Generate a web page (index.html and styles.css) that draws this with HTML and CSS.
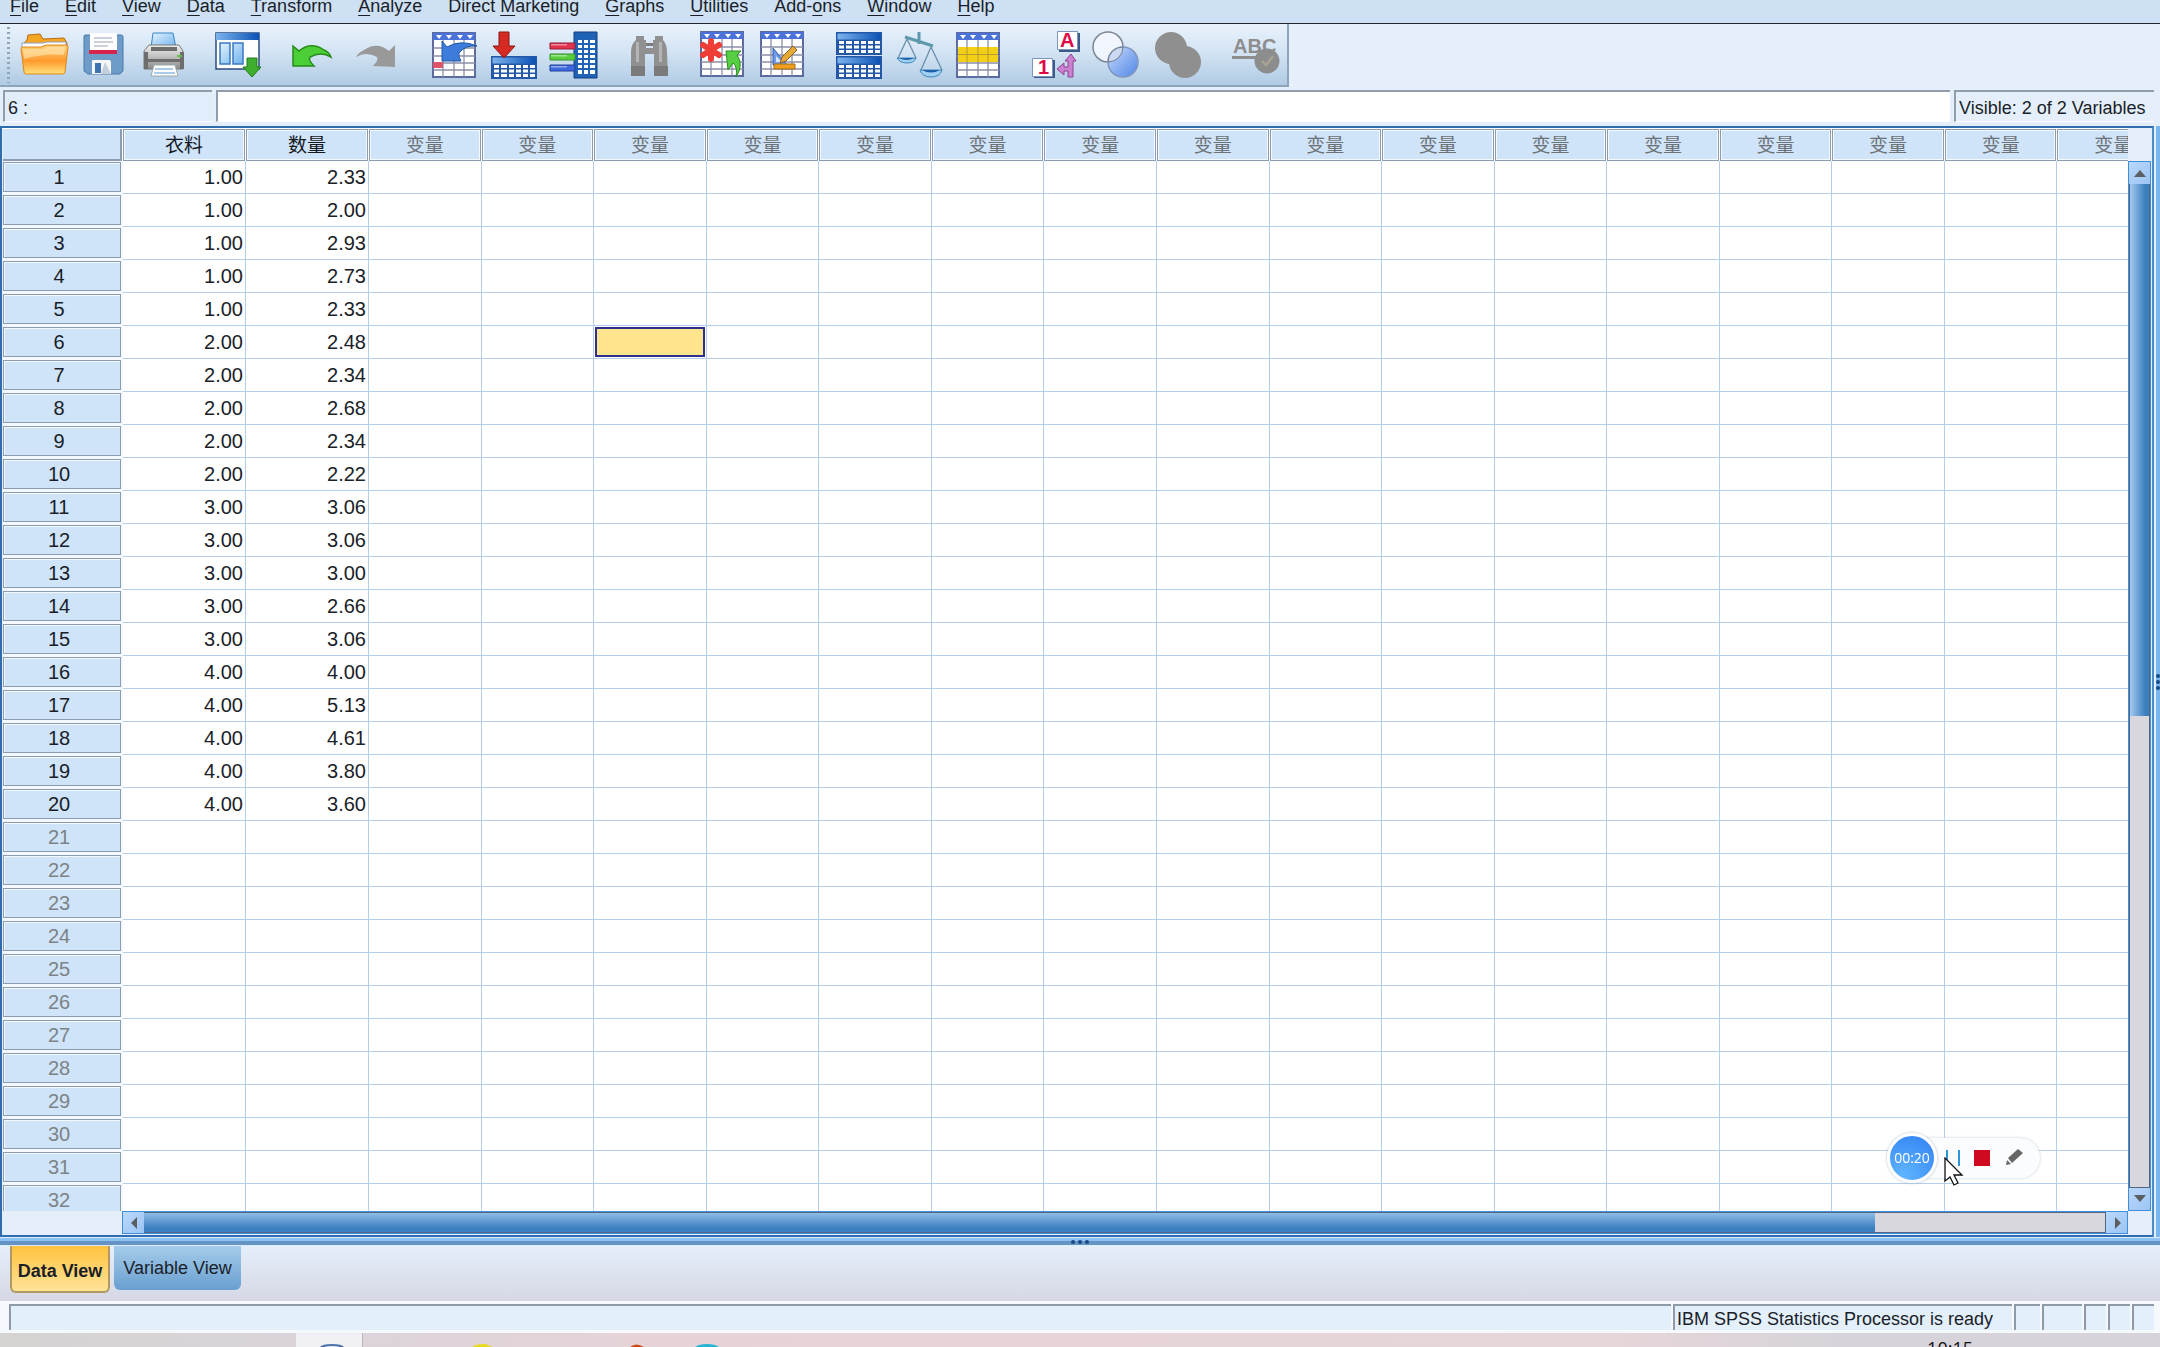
FILE: index.html
```html
<!DOCTYPE html>
<html lang="en">
<head>
<meta charset="utf-8">
<title>Data Editor</title>
<link rel="stylesheet" href="styles.css">
</head>
<body>
<svg class="defs" width="0" height="0" aria-hidden="true">
  <defs>
    <linearGradient id="gOrange" x1="0" y1="0" x2="0" y2="1"><stop offset="0" stop-color="#ffd27a"/><stop offset=".55" stop-color="#ff9a2e"/><stop offset="1" stop-color="#ffe07a"/></linearGradient>
    <linearGradient id="gBlueBar" x1="0" y1="0" x2="1" y2="0"><stop offset="0" stop-color="#7db4ee"/><stop offset="1" stop-color="#0a52b4"/></linearGradient>
    <linearGradient id="gPane" x1="0" y1="0" x2="1" y2="1"><stop offset="0" stop-color="#e2f2ff"/><stop offset="1" stop-color="#6fb2ee"/></linearGradient>
    <linearGradient id="gMetal" x1="0" y1="0" x2="0" y2="1"><stop offset="0" stop-color="#f0f0ee"/><stop offset="1" stop-color="#8c8c8c"/></linearGradient>
    <linearGradient id="gBall" x1="0" y1="0" x2="1" y2="1"><stop offset="0" stop-color="#c8dafc"/><stop offset="1" stop-color="#4f86e6"/></linearGradient>
    <symbol id="sheet" viewBox="0 0 44 46">
      <path fill="#fff" stroke="#5c6aa0" stroke-width="2" d="M1 1h42v44H1z"/>
      <path fill="#4a72d8" d="M1 1h42v7H1z"/>
      <path fill="#fff" d="M4 3h6l-3 4zM14 3h6l-3 4zM25 3h6l-3 4zM35 3h6l-3 4z"/>
      <path stroke="#8a90a8" stroke-width="1.3" fill="none" d="M11 8v37M22 8v37M32 8v37M1 16h42M1 24h42M1 31h42M1 38h42"/>
    </symbol>
    <symbol id="table" viewBox="0 0 46 23">
      <path fill="#2358a8" d="M0 0h46v23H0z"/>
      <path fill="url(#gBlueBar)" d="M1.500 1.500h43v6h-43z"/>
      <path fill="#fff" d="M3 9h5v3H3zM10 9h6v3h-6zM18 9h5v3h-5zM25 9h5v3h-5zM32 9h5v3h-5zM39 9h5v3h-5zM3 13.500h5v3H3zM10 13.500h6v3h-6zM18 13.500h5v3h-5zM25 13.500h5v3h-5zM32 13.500h5v3h-5zM39 13.500h5v3h-5zM3 18h5v3H3zM10 18h6v3h-6zM18 18h5v3h-5zM25 18h5v3h-5zM32 18h5v3h-5zM39 18h5v3h-5z"/>
    </symbol>
  </defs>
</svg>

<nav class="menubar" aria-label="Main menu">
  <a href="#"><u>F</u>ile</a><a href="#"><u>E</u>dit</a><a href="#"><u>V</u>iew</a><a href="#"><u>D</u>ata</a><a href="#"><u>T</u>ransform</a><a href="#"><u>A</u>nalyze</a><a href="#">Direct <u>M</u>arketing</a><a href="#"><u>G</u>raphs</a><a href="#"><u>U</u>tilities</a><a href="#">Add-<u>o</u>ns</a><a href="#"><u>W</u>indow</a><a href="#"><u>H</u>elp</a>
</nav>

<div class="toolbar" role="toolbar" aria-label="Data tools">
  <span class="grip"></span>
  <div class="tools">
    <button aria-label="Open"><svg viewBox="0 0 48 48"><path fill="#f5a623" stroke="#b96a10" d="M3 13l4-4 1-5 12-1 3 5 21-1 3 5v8H3z"/><path fill="#fff" stroke="#8d9fc8" d="M2 12l21 0 4-1h19v8H2z"/><path fill="url(#gOrange)" stroke="#dd8618" d="M1 18q0-2 2-2h18l5-2h20q2 0 2 2l-3 25q0 2-3 2H6q-2 0-2-2z"/><path fill="#ffe9b8" opacity=".6" d="M3 18h20l5-2h17l-1 8Q24 22 4 28z"/></svg></button>
    <button aria-label="Save"><svg viewBox="0 0 48 48"><path fill="#6d9cc9" stroke="#4a78a8" d="M4 5q0-1 2-1h35q2 0 2 2v34l-3 3H8l-4-3z"/><path fill="#fdfdfd" d="M10 2h27v17H10z"/><path stroke="#b9c2cc" stroke-width="1.500" d="M14 7h18M14 11h19M14 15h14"/><path fill="#d9234f" d="M9 19h28v4H9z"/><path fill="#f4f6f8" d="M12 30q0-1 2-1h15q2 0 2 2v12H12z"/><path fill="#3d74b0" d="M15 32h6v10h-6z"/><path fill="#c3cfdc" d="M25 31l6 12H21z"/></svg></button>
    <button aria-label="Print"><svg viewBox="0 0 48 48"><path fill="url(#gPane)" stroke="#3a84c6" d="M13 2h20l3 15H11z"/><path fill="url(#gMetal)" stroke="#777" d="M9 14h30l4 6v18H4V20z"/><path fill="#6d6d6d" d="M11 16h26v4H11zM5 28h38v3H5zM4 21h4v17H4zM40 21h4v17h-4z"/><path fill="#5fbf4a" d="M37 24h5v2h-5z"/><path fill="#fff" stroke="#9aa" d="M14 34h21l3 11H11z"/><path stroke="#8fbbe4" stroke-width="1.500" d="M15 38h18M14 42h21"/></svg></button>
  </div>
  <div class="tools">
    <button aria-label="Recall dialog"><svg viewBox="0 0 48 48"><path fill="#fff" stroke="#2b4c80" stroke-width="1.500" d="M2 2h43v36H2z"/><path fill="url(#gBlueBar)" d="M2 2h43v7H2z"/><path fill="url(#gPane)" stroke="#3a78c0" stroke-width="1.500" d="M6 12h10v21H6zM19 12h10v21H19z"/><path fill="#3fae2e" stroke="#1f7a1b" d="M33 27h10v9h4L38 46l-9-10h4z"/></svg></button>
  </div>
  <div class="tools history">
    <button aria-label="Undo"><svg viewBox="0 0 48 48"><path fill="#4ccf36" stroke="#258c1c" stroke-width="1.500" d="M3 15l6 5Q21 10 34 19q5 2 7 7-10-6-21 0-2 3 4 9H3z"/></svg></button>
    <button aria-label="Redo"><svg viewBox="0 0 48 48"><path fill="#999" d="M41 14l-6 6Q23 10 10 19q-6 3-8 7 10-6 21 0 2 3-4 9l22 1z"/></svg></button>
  </div>
  <div class="tools">
    <button aria-label="Go to case"><svg viewBox="0 0 48 48"><use href="#sheet" x="2" y="1" width="44" height="46"/><path fill="#e05468" d="M3 31h10v6H3z"/><path fill="#3d7cda" stroke="#2356a8" d="M12 10l5 6q14-8 30-1-12-1-18 7-1 3 2 8H12z"/></svg></button>
    <button aria-label="Go to variable"><svg viewBox="0 0 48 48"><use href="#table" x="1" y="25" width="46" height="23"/><path fill="#d52a22" stroke="#8c1512" d="M9 1h10v14h6L14 27 3 15h6z"/></svg></button>
    <button aria-label="Variables"><svg viewBox="0 0 48 48"><path fill="#1f62b6" stroke="#123f80" d="M24 1h23v46H24z"/><path fill="#fff" d="M28 9h4v3h-4zM34 9h4v3h-4zM40 9h5v3h-5zM28 14h4v3h-4zM34 14h4v3h-4zM40 14h5v3h-5zM28 19h4v3h-4zM34 19h4v3h-4zM40 19h5v3h-5zM28 24h4v3h-4zM34 24h4v3h-4zM40 24h5v3h-5zM28 29h4v3h-4zM34 29h4v3h-4zM40 29h5v3h-5zM28 34h4v3h-4zM34 34h4v3h-4zM40 34h5v3h-5zM28 39h4v4h-4zM34 39h4v4h-4zM40 39h5v4h-5z"/><path fill="#e0324c" stroke="#9a1b35" d="M0 12h25v6H0z"/><path fill="#58cf3a" stroke="#35922a" d="M0 23h25v6H0z"/><path fill="#3d68dd" stroke="#21409c" d="M0 34h25v6H0z"/><path fill="#fff" opacity=".45" d="M1 13h16v1.500H1zM1 24h16v1.500H1zM1 35h16v1.500H1z"/></svg></button>
  </div>
  <div class="tools">
    <button aria-label="Find"><svg viewBox="0 0 48 48"><path fill="#909090" d="M12 5h8v4h2v8h7V9h2V5h8v4q4 4 4 12l1 24H30V23h-9v22H7V21q0-8 5-12z"/><path fill="#7b7b7b" d="M7 35h14v10H7zM30 35h14v10H30zM22 12h7v3h-7z"/><path fill="#b4b4b4" d="M12 11h3v20h-3zM35 11h3v20h-3z"/></svg></button>
  </div>
  <div class="tools">
    <button aria-label="Insert cases"><svg viewBox="0 0 48 48"><use href="#sheet" x="2" y="0" width="44" height="46"/><path stroke="#ef3e36" stroke-width="6" stroke-linecap="round" d="M13 10v18M5 14l16 10M21 14L5 24"/><path fill="#56d042" stroke="#2b8c22" d="M28 20h15l-4 4q7 10-1 22 2-10-3-14l-5 7z"/></svg></button>
    <button aria-label="Insert variable"><svg viewBox="0 0 48 48"><use href="#sheet" x="2" y="0" width="44" height="46"/><path fill="#6f9be8" stroke="#2b5cb8" d="M15 17v17h14z"/><path fill="#d7e6ff" d="M18 25v6h6z"/><path fill="#e6a838" stroke="#8a6024" d="M35 15l4 4-11 11-6 2 2-6z"/><path fill="#f0a020" stroke="#a36a10" d="M16 33h21v5H16z"/></svg></button>
  </div>
  <div class="tools data">
    <button aria-label="Split file"><svg viewBox="0 0 48 48"><use href="#table" x="1" y="1" width="46" height="23"/><use href="#table" x="1" y="25" width="46" height="23"/></svg></button>
    <button aria-label="Weight cases"><svg viewBox="0 0 48 48"><path stroke="#5c99aa" stroke-width="3" fill="none" d="M24 1v12M10 6l28 9"/><path stroke="#6b8fa8" stroke-width="1.300" fill="none" d="M12 8L3 27M12 8l9 19M36 16l-10 23M36 16l11 23"/><path fill="#9fd0f2" stroke="#3c86b8" d="M2 27h19q-2 5-9 5t-10-5zM25 39h22q-2 7-11 7t-11-7z"/><path fill="#1e5fa8" d="M4 27h15q-7 4-15 0zM27 39h18q-9 5-18 0z"/></svg></button>
    <button aria-label="Select cases"><svg viewBox="0 0 48 48"><use href="#sheet" x="1" y="1" width="44" height="46"/><path fill="#f3cf18" d="M3 16h40v15H3z"/><path stroke="#b59a30" d="M3 23.500h40M12 16v15M23 16v15M33 16v15"/></svg></button>
  </div>
  <div class="tools labels">
    <button aria-label="Value labels"><svg viewBox="0 0 48 48"><path fill="#3b5a88" d="M29 2h21v19H29zM4 29h21v18H4z"/><path fill="#fff" stroke="#7d95bd" d="M27.500 .5h20v18h-20zM2.500 27.500h20v18h-20z"/><text class="glyph" x="30" y="16">A</text><text class="glyph" x="8" y="43">1</text><path fill="#cc80d0" stroke="#8b4392" d="M41 23l5 7h-3v16h-5v-6h-4v4l-7-6 7-6v4h4v-6h-3z"/></svg></button>
    <button aria-label="Use sets"><svg viewBox="0 0 48 48"><circle cx="16" cy="16" r="15" fill="#f4f8ff" fill-opacity=".85" stroke="#7d8794" stroke-width="1.500"/><circle cx="31" cy="31" r="15" fill="url(#gBall)" stroke="#7f96bd" stroke-width="1.500"/><path d="M16 31A15 15 0 0 1 31 16A15 15 0 0 1 16 31z" fill="#ccd9f3" stroke="#6f7a8a"/></svg></button>
    <button aria-label="Show all variables"><svg viewBox="0 0 48 48"><circle cx="17" cy="17" r="16" fill="#8f8f8f"/><circle cx="31" cy="31" r="16" fill="#8f8f8f"/></svg></button>
  </div>
  <div class="tools spelling">
    <button aria-label="Spell check"><svg viewBox="0 0 48 48"><text class="abc" x="2" y="22">ABC</text><path fill="#8d8d8d" d="M1 25h26v3H1z"/><circle cx="36" cy="30" r="12.500" fill="#8d8d8d"/><path fill="none" stroke="#a9a294" stroke-width="2.500" d="M31 30l4 4 7-9"/></svg></button>
  </div>
</div>

<div class="cellbar">
  <output class="cellname">6 :</output>
  <input class="cellvalue" type="text" aria-label="Cell value">
  <div class="visible">Visible: 2 of 2 Variables</div>
</div>

<main class="workspace">
  <div class="pane">
    <div class="sheet">
      <table aria-label="Data View"><thead></thead><tbody></tbody></table>
    </div>
    <div class="vscroll">
      <button aria-label="Scroll up"><svg viewBox="0 0 14 14"><path d="M7 4l6 7H1z"/></svg></button>
      <div class="track"><div class="thumb"></div></div>
      <button aria-label="Scroll down"><svg viewBox="0 0 14 14"><path d="M7 10L1 3h12z"/></svg></button>
    </div>
    <div class="hscroll">
      <button aria-label="Scroll left"><svg viewBox="0 0 14 14"><path d="M4 7l6-6v12z"/></svg></button>
      <div class="track"><div class="thumb"></div></div>
      <button aria-label="Scroll right"><svg viewBox="0 0 14 14"><path d="M11 7L5 1v12z"/></svg></button>
    </div>
  </div>
  <div class="side"><i></i><i></i><i></i></div>
</main>

<div class="splitter"><i></i><i></i><i></i></div>
<div class="tabs" role="tablist">
  <button class="tab active" role="tab" aria-selected="true">Data View</button>
  <button class="tab" role="tab" aria-selected="false">Variable View</button>
</div>
<footer class="status">
  <div class="grow"></div>
  <div class="message">IBM SPSS Statistics Processor is ready</div>
  <div class="s28"></div><div class="s42"></div><div class="s24"></div><div class="s24"></div><div class="s24"></div>
</footer>
<div class="taskbar">
  <span class="current"><svg viewBox="0 0 66 14"><path fill="#4f74ab" d="M24 14q2-3 12-3t12 3h-4q-8-2-16 0z"/></svg></span>
  <svg class="apps" viewBox="0 0 400 14"><path fill="#e8d91c" d="M110 14q1-3 12-3l8 3z"/><path fill="#cc4c1e" d="M267 14q6-5 14 0z"/><path fill="#27b4d6" d="M332 14q4-3 12-3t12 3z"/></svg>
  <time>10:15</time>
</div>

<div class="recorder">
  <span class="elapsed">00:20</span>
  <button aria-label="Pause" class="pause"></button>
  <button aria-label="Stop" class="stop"></button>
  <button aria-label="Annotate" class="pen"><svg viewBox="0 0 20 20"><path fill="#666" d="M14 1l5 4L8 15l-4-5zM3 12l4 4-5 1z"/></svg></button>
  <svg class="cursor" viewBox="0 0 20 30"><path fill="#fff" stroke="#111" stroke-width="1.300" d="M1 1v23l5-4 4 8 4-2-4-8h8z"/></svg>
</div>
<script src="app.js"></script>
</body>
</html>
```
FILE: styles.css
```css
* { box-sizing: border-box; }
body {
  margin: 0;
  height: 100vh;
  display: flex;
  flex-direction: column;
  overflow: hidden;
  background: #e4effb;
  color: #1a1e28;
  font: 18px/20px "Liberation Sans", "Noto Sans CJK SC", sans-serif;
}
button { margin: 0; padding: 0; border: 0; background: none; font: inherit; color: inherit; }
.defs { position: absolute; }

.menubar {
  flex: none;
  display: flex;
  gap: 26px;
  padding: 0 10px 11px;
  line-height: 12px;
  background: #cde0f4;
  border-bottom: 1px solid #1d2430;
}
.menubar a { color: inherit; text-decoration: none; white-space: nowrap; }
.menubar u { text-underline-offset: 3px; text-decoration-thickness: 1px; }

.toolbar {
  flex: none;
  align-self: flex-start;
  display: flex;
  align-items: center;
  gap: 14px;
  height: 63px;
  border-right: 2px solid #8fa3ba;
  border-bottom: 2px solid #8fa3ba;
  background: linear-gradient(#e8f2fc, #d4e4f4 45%, #b0cbe4);
}
.grip {
  width: 3px;
  height: 56px;
  margin: 0 -10px 0 7px;
  background: repeating-linear-gradient(#8ea4bd 0 2px, transparent 2px 5px);
}
.tools { display: flex; }
.tools button { width: 60px; height: 48px; }
.tools svg { display: block; width: 48px; height: 48px; margin: 0 auto; overflow: visible; }
.tools.data { margin-left: 3px; }
.history button, .spelling button { width: 64px; }
.labels button { width: 62px; }
.glyph { font: bold 20px "Liberation Sans", sans-serif; fill: #dc0a46; }
.abc { font: bold 20px "Liberation Sans", sans-serif; fill: #8d8d8d; }

.cellbar {
  flex: none;
  display: flex;
  gap: 4px;
  height: 39px;
  padding: 3px 6px 4px 3px;
}
.cellbar > * {
  border: 0 solid #929dab;
  border-width: 2px 0 0 2px;
  border-bottom: 1px solid #fff;
  line-height: 32px;
}
.cellname { width: 209px; padding-left: 3px; background: #e1edfb; }
.cellvalue { flex: 1; padding: 0 4px; background: #fff; font: inherit; outline: none; }
.visible { width: 200px; padding-left: 3px; white-space: nowrap; }

.workspace { flex: 1; min-height: 0; display: flex; gap: 2px; }
.pane {
  flex: 1;
  min-width: 0;
  display: grid;
  grid-template-columns: minmax(0, 1fr) 23px;
  grid-template-rows: minmax(0, 1fr) 23px;
  padding: 0 1px 1px;
  border: 2px solid #2f6db0;
  border-right-color: #4c8ccb;
}
.side {
  width: 4px;
  display: flex;
  flex-direction: column;
  align-items: center;
  justify-content: center;
  gap: 2px;
  background: #79b6f0;
}
.side i { width: 4px; height: 4px; border-radius: 2px; background: #174a86; }

.sheet { overflow: hidden; background: #fff; }
.sheet table {
  width: calc(100% + 42px);
  table-layout: fixed;
  border-collapse: separate;
  border-spacing: 0;
  font-size: 20px;
  line-height: 24px;
}
.sheet tr { height: 33px; }
.sheet th, .sheet td { height: 33px; padding: 0; }
.sheet th { font-weight: normal; background: #cfe3f9; background-clip: padding-box; }
.sheet thead th {
  padding-top: 2px;
  border-top: 1px solid #fff;
  border-right: 1px solid #fff;
  box-shadow: inset 0 0 0 1px #8c9bb0, inset 0 0 0 2px #f4f9ff;
  color: #6c7276;
  font-size: 19px;
}
.sheet thead .named { color: #14181f; }
.sheet thead .corner { width: 120px; box-shadow: inset -2px -2px 0 0 #8c9bb0; }
.sheet thead .named { width: 123px; }
.sheet tbody th {
  border: 0 solid #f4f9ff;
  border-width: 1px 2px 2px 0;
  padding-right: 6px;
  box-shadow: inset 0 0 0 1px #8c9bb0, inset 2px 2px 0 0 #f4f9ff;
}
.sheet tbody .unused { color: #7c8386; }
.sheet td {
  padding-right: 2px;
  border-right: 1px solid #b4cdea;
  border-bottom: 1px solid #b4cdea;
  text-align: right;
}
.sheet .selected {
  background: #fde48d;
  box-shadow: inset 0 0 0 1px #fff, inset 0 0 0 3px #2d2f8e;
}

.vscroll, .hscroll { display: flex; border: 1px solid #3f8fdc; }
.vscroll { flex-direction: column; margin-top: 33px; }
.hscroll { margin-left: 119px; }
.vscroll button, .hscroll button {
  flex: none;
  display: flex;
  align-items: center;
  justify-content: center;
  background: linear-gradient(135deg, #b9d8fb, #9cc4f5);
}
.vscroll button { height: 22px; }
.hscroll button { width: 21px; }
.vscroll svg, .hscroll svg { width: 14px; height: 14px; fill: #5a5f62; }
.track { flex: 1; border: 1px solid #51667f; background: #d9d7de; }
.vscroll .track { border-top: 0; }
.hscroll .track { border-left: 0; }
.vscroll .thumb { height: 53%; background: linear-gradient(90deg, #a3caf0, #3c7fbf 80%); }
.hscroll .thumb { width: calc(100% - 230px); height: 100%; background: linear-gradient(#8ebce6, #3c7fbf 80%); }

.splitter {
  flex: none;
  display: flex;
  align-items: center;
  justify-content: center;
  gap: 3px;
  height: 9px;
  background: linear-gradient(#dcecfb 0 1px, #8cc2f2 1px 4px, #6593c3 4px 8px, #dcecfb 8px);
}
.splitter i { width: 4px; height: 4px; border-radius: 2px; background: #174a86; }

.tabs {
  flex: none;
  display: flex;
  align-items: flex-start;
  gap: 4px;
  height: 55px;
  padding-left: 10px;
  background: linear-gradient(#e4effb, #d6d7e4);
}
.tab {
  width: 127px;
  height: 44px;
  border-radius: 0 0 6px 6px;
  background: linear-gradient(#a5cbea, #699fd0);
}
.tab.active {
  width: 100px;
  height: 47px;
  padding-top: 4px;
  border: 2px solid #b09a62;
  border-top: 0;
  background: linear-gradient(#ffc23e, #ffe398);
  font-weight: bold;
}

.status {
  flex: none;
  display: flex;
  gap: 2px;
  height: 32px;
  padding: 3px 6px 3px 9px;
  background: #f5f9fe;
}
.status > div {
  border: 0 solid #8f9aa8;
  border-width: 2px 0 0 2px;
  background: #e3effb;
  line-height: 26px;
}
.status .grow { flex: 1; }
.message { width: 339px; padding-left: 2px; white-space: nowrap; }
.status .s28 { width: 26px; }
.status .s42 { width: 40px; }
.status .s24 { width: 22px; }

.taskbar {
  flex: none;
  display: flex;
  height: 14px;
  padding: 0 187px 0 296px;
  overflow: hidden;
  background: linear-gradient(90deg, #d5d3d2, #dad4da 15%, #e6d3d8 30%, #e6d5d9 75%, #d6d4da 85%);
}
.current { width: 67px; background: #f0eff3; border-right: 1px solid #b9b6be; }
.current svg { display: block; width: 66px; height: 14px; }
.apps { width: 400px; height: 14px; }
.taskbar time {
  margin-left: auto;
  padding-top: 5px;
  font: 18px/20px "Open Sans", sans-serif;
  color: #111;
}

.recorder {
  position: fixed;
  right: 120px;
  bottom: 164px;
  display: flex;
  align-items: center;
  gap: 14px;
  height: 50px;
  padding-right: 16px;
}
.recorder::before {
  content: "";
  position: absolute;
  z-index: -1;
  inset: 5px 0 5px 20px;
  border-radius: 20px;
  background: #fbfcfe;
  box-shadow: 0 0 3px #c3ccd8;
}
.elapsed {
  width: 50px;
  height: 50px;
  border: 3px solid #fff;
  border-radius: 50%;
  background: radial-gradient(circle at 30% 90%, #5fb6ff, #3685f5 90%);
  box-shadow: 0 0 3px #aab6c4;
  color: #fff;
  font: 14px/44px "Open Sans", sans-serif;
  text-align: center;
}
.pause { width: 14px; height: 16px; margin-left: -5px; border: 2px solid #2b96dc; border-width: 0 2px; }
.stop { width: 16px; height: 16px; background: #cf0a20; }
.pen svg { display: block; width: 20px; height: 20px; }
.cursor { position: absolute; left: 57px; top: 24px; width: 20px; height: 30px; }
```
FILE: app.js
```js
const cases = [
  ["1.00", "2.33"], ["1.00", "2.00"], ["1.00", "2.93"], ["1.00", "2.73"], ["1.00", "2.33"],
  ["2.00", "2.48"], ["2.00", "2.34"], ["2.00", "2.68"], ["2.00", "2.34"], ["2.00", "2.22"],
  ["3.00", "3.06"], ["3.00", "3.06"], ["3.00", "3.00"], ["3.00", "2.66"], ["3.00", "3.06"],
  ["4.00", "4.00"], ["4.00", "5.13"], ["4.00", "4.61"], ["4.00", "3.80"], ["4.00", "3.60"]
];
const variables = ["衣料", "数量"];
const columnCount = 18;
const rowCount = 32;
const selected = { row: 5, column: 4 };

function addCell(row, tag, text, className) {
  const cell = document.createElement(tag);
  cell.textContent = text;
  if (className) cell.className = className;
  if (tag === "th") cell.scope = row.parentNode.tagName === "THEAD" ? "col" : "row";
  row.append(cell);
}

const head = document.querySelector("thead").insertRow();
addCell(head, "th", "", "corner");
for (let c = 0; c < columnCount; c++) {
  addCell(head, "th", variables[c] || "变量", variables[c] ? "named" : "");
}

const body = document.querySelector("tbody");
for (let r = 0; r < rowCount; r++) {
  const row = body.insertRow();
  addCell(row, "th", r + 1, cases[r] ? "" : "unused");
  for (let c = 0; c < columnCount; c++) {
    const isSelected = r === selected.row && c === selected.column;
    addCell(row, "td", (cases[r] && cases[r][c]) || "", isSelected ? "selected" : "");
  }
}
```
